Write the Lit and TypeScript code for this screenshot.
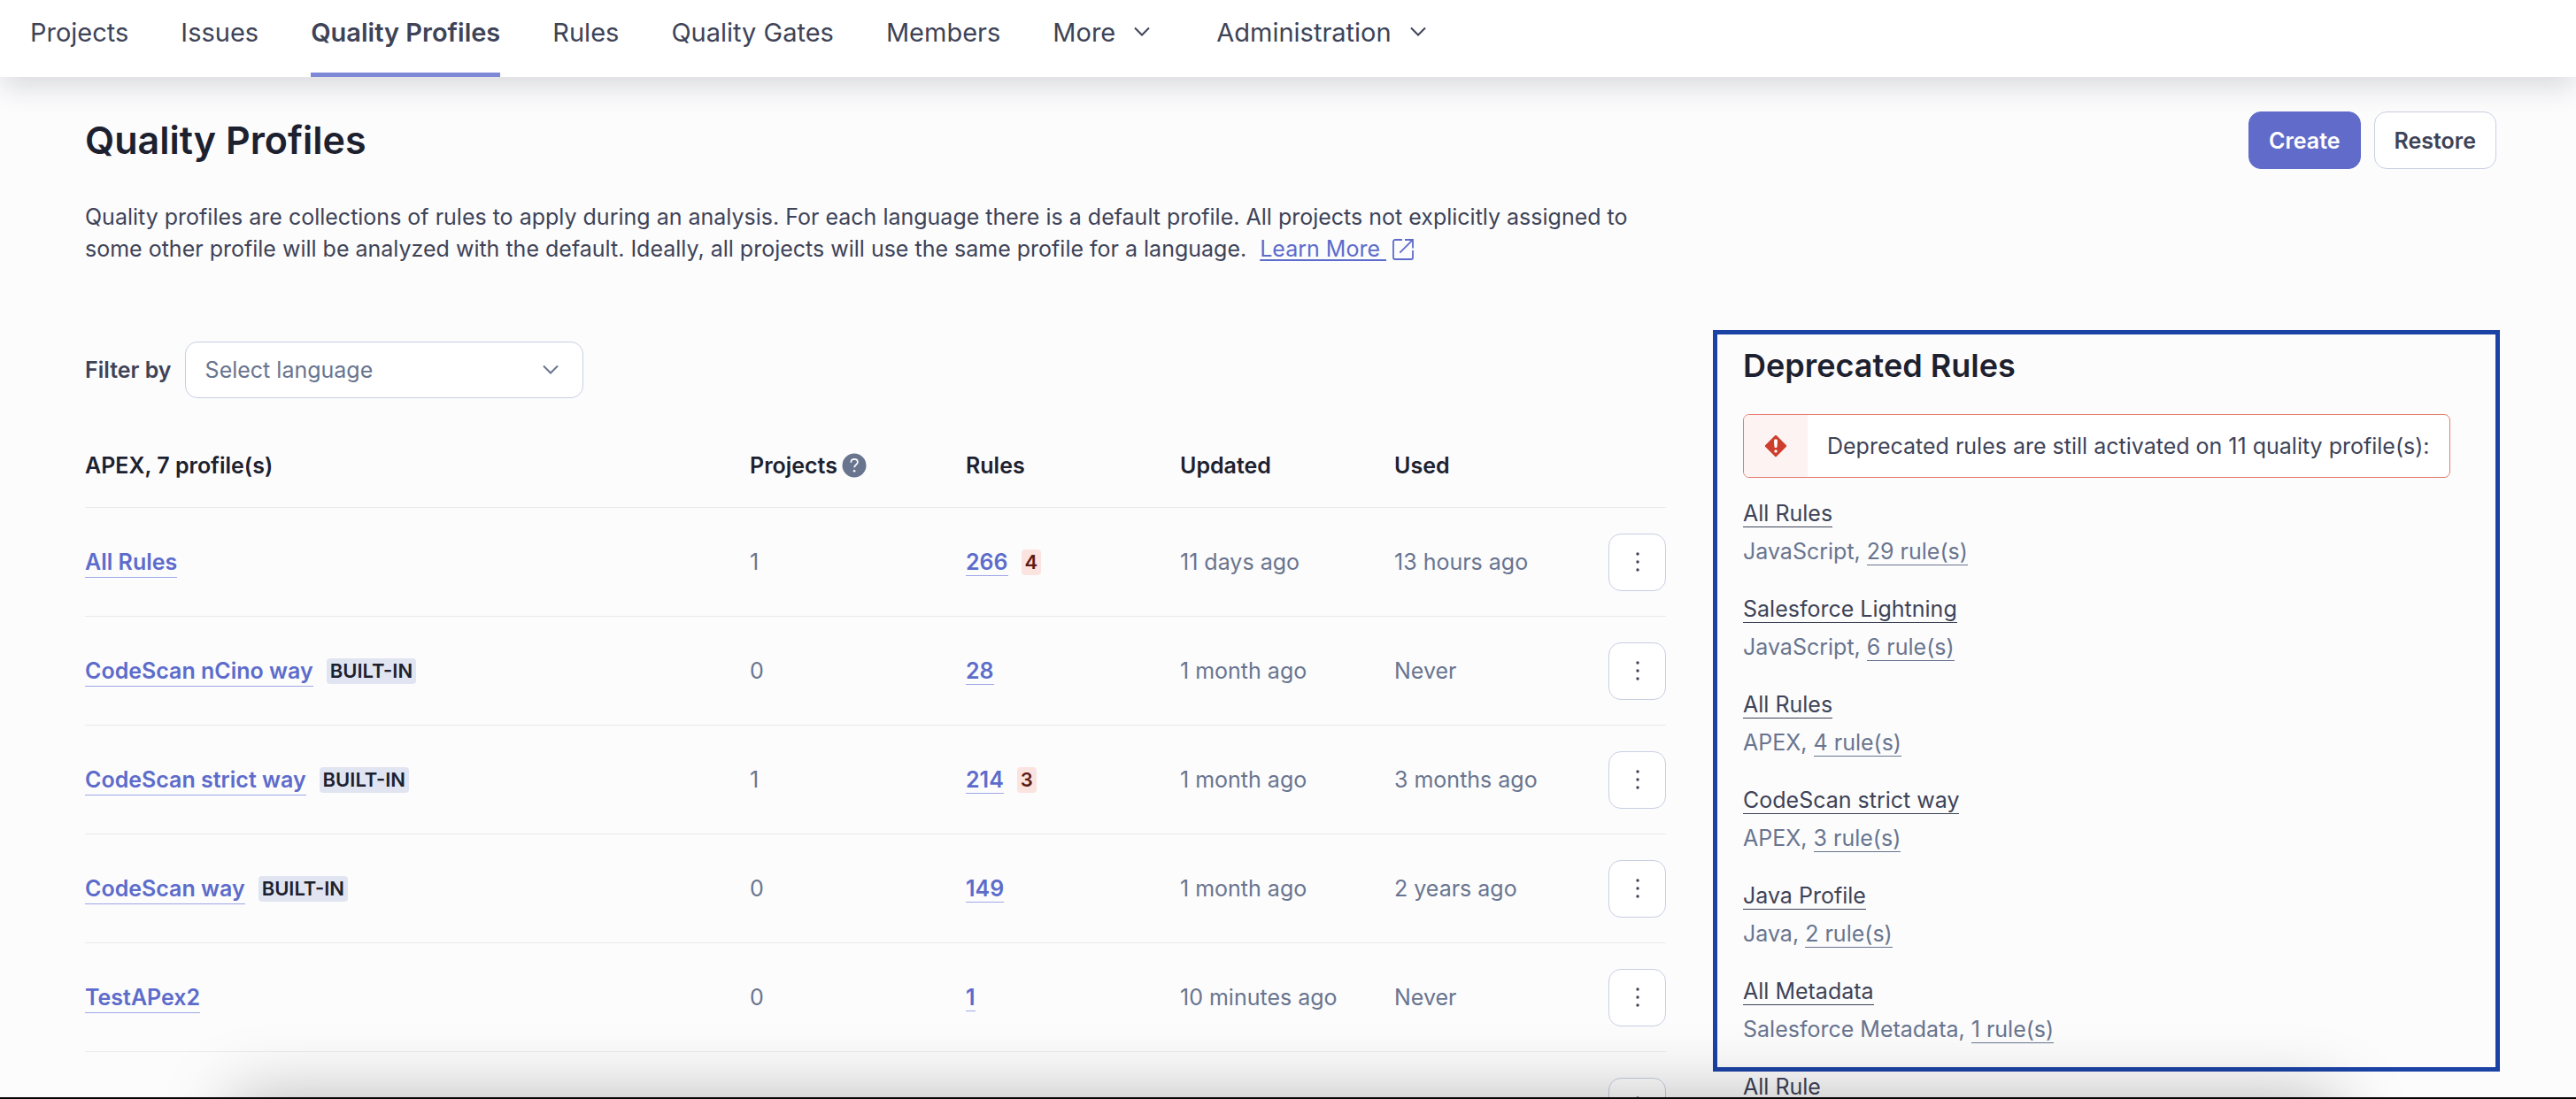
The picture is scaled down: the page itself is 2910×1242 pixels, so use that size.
import { LitElement, html, css, nothing } from "lit";
import { customElement } from "lit/decorators.js";

interface Profile {
  name?: string;
  builtIn?: boolean;
  projects?: number;
  rules?: number;
  deprecated?: number;
  updated?: string;
  used?: string;
}

const profiles: Profile[] = [
  { name: "All Rules", projects: 1, rules: 266, deprecated: 4, updated: "11 days ago", used: "13 hours ago" },
  { name: "CodeScan nCino way", builtIn: true, projects: 0, rules: 28, updated: "1 month ago", used: "Never" },
  { name: "CodeScan strict way", builtIn: true, projects: 1, rules: 214, deprecated: 3, updated: "1 month ago", used: "3 months ago" },
  { name: "CodeScan way", builtIn: true, projects: 0, rules: 149, updated: "1 month ago", used: "2 years ago" },
  { name: "TestAPex2", projects: 0, rules: 1, updated: "10 minutes ago", used: "Never" },
  {},
];

const deprecated = [
  { name: "All Rules", language: "JavaScript", count: 29 },
  { name: "Salesforce Lightning", language: "JavaScript", count: 6 },
  { name: "All Rules", language: "APEX", count: 4 },
  { name: "CodeScan strict way", language: "APEX", count: 3 },
  { name: "Java Profile", language: "Java", count: 2 },
  { name: "All Metadata", language: "Salesforce Metadata", count: 1 },
  { name: "All Rule" },
];

const links = ["Projects", "Issues", "Quality Profiles", "Rules", "Quality Gates", "Members"];
const menus = ["More", "Administration"];

const chevron = html`<svg class="chevron" viewBox="0 0 20 12" width="20" height="12" aria-hidden="true">
  <path d="M2 1.500l8 8 8-8" fill="none" stroke="currentColor" stroke-width="2" />
</svg>`;

@customElement("app-root")
export class AppRoot extends LitElement {
  static styles = css`
    :host {
      display: block;
      position: relative;
      height: 100vh;
      overflow: hidden;
      background: #fcfcfd;
      color: #3e4357;
      font: 400 25px/36px Inter, "Liberation Sans", sans-serif;
    }
    * {
      box-sizing: border-box;
    }
    h1, h2, p, ul {
      margin: 0;
      padding: 0;
    }
    button, select {
      font: inherit;
      color: inherit;
      margin: 0;
    }
    svg {
      flex: none;
    }
    .topbar {
      position: relative;
      z-index: 1;
      display: flex;
      gap: 59px;
      height: 87px;
      padding: 0 34px;
      background: #fff;
      box-shadow: 0 15px 30px -2px rgba(29, 33, 47, 0.14);
      font-size: 29px;
      line-height: 40px;
    }
    .tab {
      display: flex;
      align-items: flex-start;
      padding: 17px 0 25px;
      border: 0;
      border-bottom: 5px solid transparent;
      background: none;
      color: inherit;
      text-decoration: none;
      white-space: nowrap;
    }
    .tab.active {
      font-weight: 600;
      border-bottom-color: #7d88d6;
    }
    .tab .chevron {
      margin: 13px 0 0 20px;
    }
    .menus {
      display: flex;
      gap: 74px;
    }
    .page {
      padding: 39px 90px 0 96px;
    }
    .heading {
      display: flex;
      justify-content: space-between;
      align-items: center;
    }
    h1 {
      padding-bottom: 2px;
      color: #1d212f;
      font-size: 43px;
      line-height: 58px;
      font-weight: 600;
    }
    .actions {
      display: flex;
      gap: 15px;
    }
    .button {
      height: 65px;
      padding: 0 22px;
      border: 1px solid #c8cfe1;
      border-radius: 14px;
      background: #fff;
      font-weight: 600;
    }
    .button.primary {
      border-color: #616bc9;
      background: #616bc9;
      color: #fff;
    }
    .intro {
      max-width: 1800px;
      margin-top: 36px;
    }
    .learn {
      margin-left: 8px;
      color: #5d6ccb;
      text-decoration-thickness: 2px;
      text-underline-offset: 3px;
      white-space: pre;
    }
    .external {
      margin-left: 7px;
      color: #5d6ccb;
      vertical-align: -4px;
    }
    .columns {
      display: grid;
      grid-template-columns: minmax(0, 1fr) 851px;
      gap: 87px;
      margin-top: 87px;
    }
    .filter {
      display: flex;
      align-items: center;
      gap: 15px;
    }
    .filter label {
      font-weight: 600;
    }
    .picker {
      display: grid;
      align-items: center;
      width: 450px;
    }
    .picker select {
      grid-area: 1 / 1;
      appearance: none;
      width: 100%;
      height: 64px;
      padding: 0 22px;
      border: 1px solid #c8cfe1;
      border-radius: 14px;
      background: #fff;
      color: #69758f;
    }
    .picker .chevron {
      grid-area: 1 / 1;
      justify-self: end;
      margin-right: 27px;
      color: #69758f;
      pointer-events: none;
    }
    table {
      width: 100%;
      margin-top: 29px;
      border-collapse: separate;
      border-spacing: 0;
      table-layout: fixed;
    }
    th, td {
      height: 123px;
      padding: 0 0 0 14px;
      border-bottom: 1px solid #e9eaec;
      text-align: left;
      vertical-align: middle;
      color: #69758f;
      font-weight: 400;
      white-space: nowrap;
    }
    thead th, thead td {
      height: 95px;
      color: #1d212f;
      font-weight: 600;
    }
    th:first-child {
      padding-left: 0;
    }
    .wide {
      width: auto;
    }
    .count {
      width: 244px;
    }
    .value {
      width: 242px;
    }
    .menu {
      width: 79px;
    }
    .cell {
      display: flex;
      align-items: center;
      gap: 15px;
    }
    .cell.tight {
      gap: 5px;
    }
    .link {
      border-bottom: 1px solid #9fa8e6;
      color: #5d6ccb;
      font-weight: 600;
      line-height: 30px;
      text-decoration: none;
    }
    .link.name {
      padding: 3px 0 2px;
    }
    .badge {
      padding: 0 4px;
      border-radius: 4px;
      background: #e1e5f2;
      color: #1d212f;
      font-size: 22px;
      line-height: 29px;
      font-weight: 600;
    }
    .badge.alarm {
      background: #fbe3e0;
      color: #5d1d13;
    }
    .kebab {
      display: flex;
      align-items: center;
      justify-content: center;
      width: 65px;
      height: 65px;
      padding: 0;
      border: 1px solid #c8cfe1;
      border-radius: 14px;
      background: #fff;
    }
    aside {
      position: relative;
      padding-top: 2px;
    }
    .frame {
      position: absolute;
      inset: -13px -4px auto -34px;
      height: 838px;
      border: 5px solid #1b43a5;
      pointer-events: none;
    }
    h2 {
      color: #1d212f;
      font-size: 36px;
      line-height: 50px;
      font-weight: 600;
    }
    .alert {
      display: flex;
      width: fit-content;
      height: 72px;
      margin: 30px 0 22px;
      border: 1px solid #e8776b;
      border-radius: 7px;
      background: #fff;
      overflow: hidden;
    }
    .alert-icon {
      display: flex;
      align-items: center;
      justify-content: center;
      width: 72px;
      background: #fdf3f3;
    }
    .alert-text {
      padding: 17px 22px;
    }
    .rules {
      display: flex;
      flex-direction: column;
      gap: 29px;
      list-style: none;
    }
    .rules li {
      display: flex;
      flex-direction: column;
      gap: 7px;
    }
    .rules .sub {
      color: #69758f;
    }
    .rules a {
      border-bottom: 1px solid currentColor;
      color: inherit;
      text-decoration: none;
    }
    .dock {
      position: absolute;
      inset: auto 270px -98px 262px;
      height: 100px;
      box-shadow: 0 0 80px rgba(0, 0, 0, 0.27);
      pointer-events: none;
    }
    .edge {
      position: absolute;
      inset: auto 0 0 0;
      height: 2px;
      background: #050505;
    }
  `;

  private row(p: Profile) {
    return html`<tr>
      <th scope="row">
        ${p.name
          ? html`<div class="cell">
              <a class="link name" href="#">${p.name}</a>
              ${p.builtIn ? html`<span class="badge">BUILT-IN</span>` : nothing}
            </div>`
          : nothing}
      </th>
      <td>${p.projects}</td>
      <td>
        ${p.rules !== undefined
          ? html`<div class="cell">
              <a class="link" href="#">${p.rules}</a>
              ${p.deprecated ? html`<span class="badge alarm">${p.deprecated}</span>` : nothing}
            </div>`
          : nothing}
      </td>
      <td>${p.updated}</td>
      <td>${p.used}</td>
      <td>
        <button class="kebab" type="button" aria-label="Profile actions">
          <svg viewBox="0 0 4 24" width="4" height="24" fill="#3e4357" aria-hidden="true">
            <circle cx="2" cy="3" r="1.700" />
            <circle cx="2" cy="12" r="1.700" />
            <circle cx="2" cy="21" r="1.700" />
          </svg>
        </button>
      </td>
    </tr>`;
  }

  render() {
    return html`
      <nav class="topbar">
        ${links.map(
          (l) => html`<a class="tab ${l === "Quality Profiles" ? "active" : ""}" href="#">${l}</a>`
        )}
        <div class="menus">
          ${menus.map((m) => html`<button class="tab" type="button">${m}${chevron}</button>`)}
        </div>
      </nav>
      <main class="page">
        <header class="heading">
          <h1>Quality Profiles</h1>
          <div class="actions">
            <button class="button primary" type="button">Create</button>
            <button class="button" type="button">Restore</button>
          </div>
        </header>
        <p class="intro">
          Quality profiles are collections of rules to apply during an analysis. For each language there is a default
          profile. All projects not explicitly assigned to some other profile will be analyzed with the default.
          Ideally, all projects will use the same profile for a language.
          <a class="learn" href="#">Learn More </a><svg class="external" viewBox="0 0 24 24" width="24" height="24" fill="none" stroke="currentColor" stroke-width="1.800" aria-hidden="true">
            <path d="M11 1H3a2 2 0 0 0-2 2v18a2 2 0 0 0 2 2h18a2 2 0 0 0 2-2v-8M14 1h9v9.500M22.800 1.200L8.300 15.700" />
          </svg>
        </p>
        <div class="columns">
          <section>
            <div class="filter">
              <label for="language">Filter by</label>
              <div class="picker">
                <select id="language"><option>Select language</option></select>
                ${chevron}
              </div>
            </div>
            <table>
              <colgroup>
                <col class="wide" /><col class="count" /><col class="value" /><col class="value" /><col class="value" /><col class="menu" />
              </colgroup>
              <thead>
                <tr>
                  <th scope="col">APEX, 7 profile(s)</th>
                  <th scope="col">
                    <div class="cell tight">
                      Projects
                      <svg viewBox="0 0 28 28" width="28" height="28" aria-hidden="true">
                        <circle cx="14" cy="14" r="13.500" fill="#69758f" />
                        <path d="M10.300 10.800c0-2.400 1.600-3.900 3.800-3.900s3.800 1.400 3.800 3.400c0 2.700-3.700 3-3.700 5.900" fill="none" stroke="#fff" stroke-width="1.700" />
                        <circle cx="14.100" cy="20.300" r="1.300" fill="#fff" />
                      </svg>
                    </div>
                  </th>
                  <th scope="col">Rules</th>
                  <th scope="col">Updated</th>
                  <th scope="col">Used</th>
                  <td></td>
                </tr>
              </thead>
              <tbody>
                ${profiles.map((p) => this.row(p))}
              </tbody>
            </table>
          </section>
          <aside>
            <h2>Deprecated Rules</h2>
            <div class="alert" role="alert">
              <div class="alert-icon">
                <svg viewBox="0 0 26 26" width="26" height="26" aria-hidden="true">
                  <path d="M12 1.300a1.400 1.400 0 0 1 2 0l10.700 10.700a1.400 1.400 0 0 1 0 2l-10.700 10.700a1.400 1.400 0 0 1-2 0l-10.700-10.700a1.400 1.400 0 0 1 0-2z" fill="#cd3f2c" />
                  <path d="M11 7.300a2 2 0 0 1 4 0l-.4 6.200a1.600 1.600 0 0 1-3.200 0z" fill="#fff" />
                  <circle cx="13" cy="18.900" r="1.700" fill="#fff" />
                </svg>
              </div>
              <div class="alert-text">Deprecated rules are still activated on 11 quality profile(s):</div>
            </div>
            <ul class="rules">
              ${deprecated.map(
                (d) => html`<li>
                  <div><a href="#">${d.name}</a></div>
                  ${d.language
                    ? html`<div class="sub">${d.language}, <a href="#">${d.count} rule(s)</a></div>`
                    : nothing}
                </li>`
              )}
            </ul>
            <div class="frame"></div>
          </aside>
        </div>
      </main>
      <div class="dock"></div>
      <div class="edge"></div>
    `;
  }
}
